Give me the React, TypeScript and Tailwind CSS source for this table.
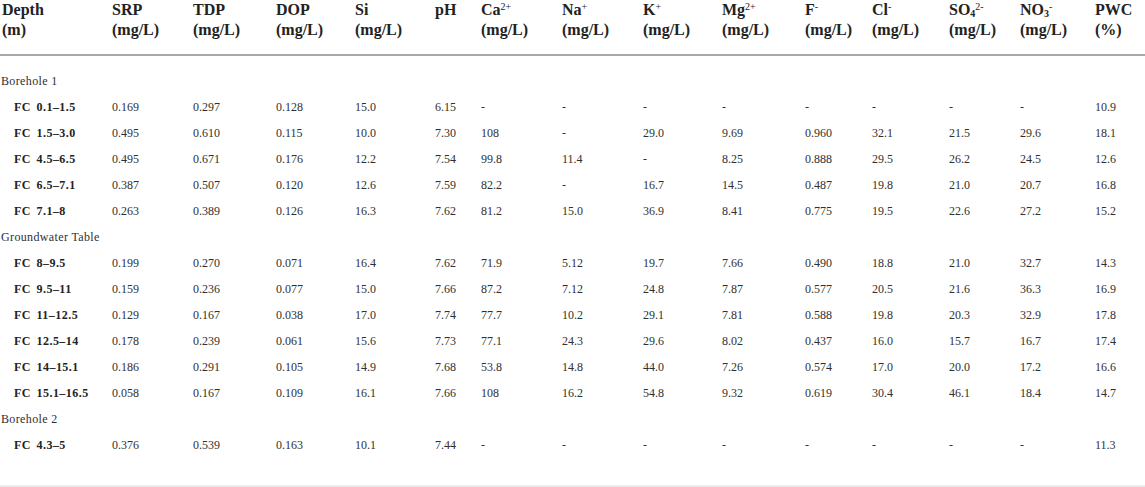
import { ReactNode } from 'react'

// column widths chosen so each column starts where the source table does
const colWidths = [
  'w-[112px]', 'w-[81px]', 'w-[83px]', 'w-[79px]', 'w-[80px]',
  'w-[46px]', 'w-[81px]', 'w-[81px]', 'w-[79px]', 'w-[83px]',
  'w-[67px]', 'w-[77px]', 'w-[71px]', 'w-[75px]', 'w-[50px]',
]

const Sup = ({ children }: { children: ReactNode }) => (
  <sup className="text-[10px] font-normal -top-[0.55em]">{children}</sup>
)
const Sub = ({ children }: { children: ReactNode }) => (
  <sub className="text-[10px] -bottom-[0.2em]">{children}</sub>
)

const headers: { top: ReactNode; unit?: string }[] = [
  { top: 'Depth', unit: '(m)' },
  { top: 'SRP', unit: '(mg/L)' },
  { top: 'TDP', unit: '(mg/L)' },
  { top: 'DOP', unit: '(mg/L)' },
  { top: 'Si', unit: '(mg/L)' },
  { top: 'pH' },
  { top: <>Ca<Sup>2+</Sup></>, unit: '(mg/L)' },
  { top: <>Na<Sup>+</Sup></>, unit: '(mg/L)' },
  { top: <>K<Sup>+</Sup></>, unit: '(mg/L)' },
  { top: <>Mg<Sup>2+</Sup></>, unit: '(mg/L)' },
  { top: <>F<Sup>-</Sup></>, unit: '(mg/L)' },
  { top: <>Cl<Sup>-</Sup></>, unit: '(mg/L)' },
  { top: <>SO<Sub>4</Sub><Sup>2-</Sup></>, unit: '(mg/L)' },
  { top: <>NO<Sub>3</Sub><Sup>-</Sup></>, unit: '(mg/L)' },
  { top: 'PWC', unit: '(%)' },
]

type Row = { group: string } | { depth: string; values: string[] }

const rows: Row[] = [
  { group: 'Borehole 1' },
  { depth: 'FC 0.1–1.5', values: ['0.169', '0.297', '0.128', '15.0', '6.15', '-', '-', '-', '-', '-', '-', '-', '-', '10.9'] },
  { depth: 'FC 1.5–3.0', values: ['0.495', '0.610', '0.115', '10.0', '7.30', '108', '-', '29.0', '9.69', '0.960', '32.1', '21.5', '29.6', '18.1'] },
  { depth: 'FC 4.5–6.5', values: ['0.495', '0.671', '0.176', '12.2', '7.54', '99.8', '11.4', '-', '8.25', '0.888', '29.5', '26.2', '24.5', '12.6'] },
  { depth: 'FC 6.5–7.1', values: ['0.387', '0.507', '0.120', '12.6', '7.59', '82.2', '-', '16.7', '14.5', '0.487', '19.8', '21.0', '20.7', '16.8'] },
  { depth: 'FC 7.1–8', values: ['0.263', '0.389', '0.126', '16.3', '7.62', '81.2', '15.0', '36.9', '8.41', '0.775', '19.5', '22.6', '27.2', '15.2'] },
  { group: 'Groundwater Table' },
  { depth: 'FC 8–9.5', values: ['0.199', '0.270', '0.071', '16.4', '7.62', '71.9', '5.12', '19.7', '7.66', '0.490', '18.8', '21.0', '32.7', '14.3'] },
  { depth: 'FC 9.5–11', values: ['0.159', '0.236', '0.077', '15.0', '7.66', '87.2', '7.12', '24.8', '7.87', '0.577', '20.5', '21.6', '36.3', '16.9'] },
  { depth: 'FC 11–12.5', values: ['0.129', '0.167', '0.038', '17.0', '7.74', '77.7', '10.2', '29.1', '7.81', '0.588', '19.8', '20.3', '32.9', '17.8'] },
  { depth: 'FC 12.5–14', values: ['0.178', '0.239', '0.061', '15.6', '7.73', '77.1', '24.3', '29.6', '8.02', '0.437', '16.0', '15.7', '16.7', '17.4'] },
  { depth: 'FC 14–15.1', values: ['0.186', '0.291', '0.105', '14.9', '7.68', '53.8', '14.8', '44.0', '7.26', '0.574', '17.0', '20.0', '17.2', '16.6'] },
  { depth: 'FC 15.1–16.5', values: ['0.058', '0.167', '0.109', '16.1', '7.66', '108', '16.2', '54.8', '9.32', '0.619', '30.4', '46.1', '18.4', '14.7'] },
  { group: 'Borehole 2' },
  { depth: 'FC 4.3–5', values: ['0.376', '0.539', '0.163', '10.1', '7.44', '-', '-', '-', '-', '-', '-', '-', '-', '11.3'] },
]

export default function App() {
  return (
    <div className="w-[1145px] h-[487px] bg-white overflow-hidden font-['Liberation_Serif',serif] text-[#303030]">
      <table className="w-[1145px] table-fixed border-collapse">
        <colgroup>
          {colWidths.map((w, i) => (
            <col key={i} className={w} />
          ))}
        </colgroup>
        <thead>
          <tr className="border-b-2 border-[#a8a8a8]">
            {headers.map((h, i) => (
              <th
                key={i}
                className={`text-left align-top font-bold text-[16px] leading-[20px] text-[#222] pb-[14px] ${i === 0 ? 'pl-[2px]' : ''}`}
              >
                <div className="whitespace-nowrap">{h.top}</div>
                {h.unit && <div className="whitespace-nowrap">{h.unit}</div>}
              </th>
            ))}
          </tr>
        </thead>
        <tbody className="text-[12px]">
          <tr className="h-[13px]"><td colSpan={15} /></tr>
          {rows.map((r, i) =>
            'group' in r ? (
              <tr key={i} className="h-[26px]">
                <td colSpan={15} className="pl-[1px] tracking-[0.03em] whitespace-nowrap">
                  {r.group}
                </td>
              </tr>
            ) : (
              <tr key={i} className="h-[26px]">
                <td className="pl-[14px] font-bold text-[#222] tracking-[0.04em] whitespace-nowrap [word-spacing:2px]">
                  {r.depth}
                </td>
                {r.values.map((v, j) => (
                  <td key={j} className="whitespace-nowrap">
                    {v}
                  </td>
                ))}
              </tr>
            )
          )}
          <tr className="h-[27px]"><td colSpan={15} /></tr>
        </tbody>
      </table>
      <div className="h-[2px] bg-[#ebebeb]" />
    </div>
  )
}
